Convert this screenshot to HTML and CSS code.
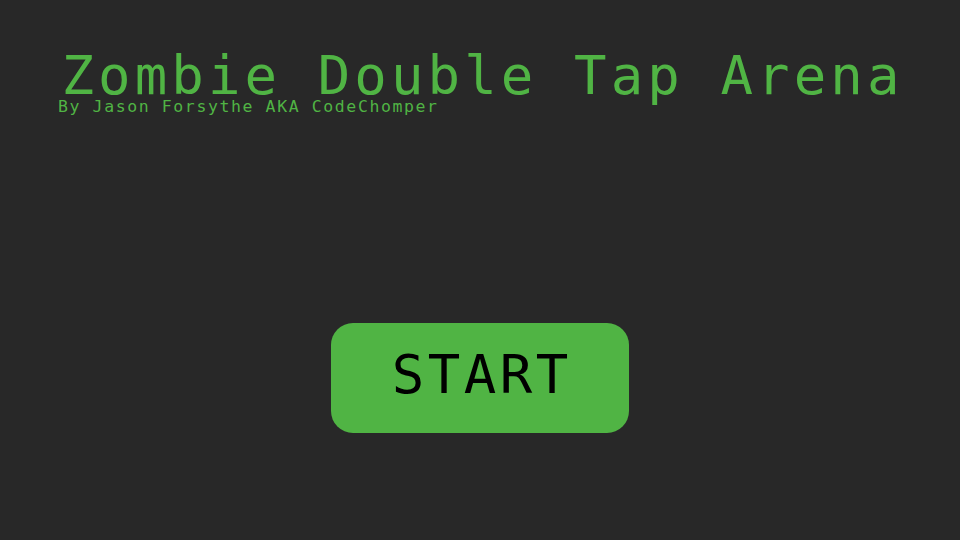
FILE: index.html
```html
<!DOCTYPE html>
<html>
<head>
<meta charset="utf-8">
<link rel="stylesheet" href="styles.css">
</head>
<body>
<main class="screen">
  <header class="header">
    <h1 class="title">Zombie Double Tap Arena</h1>
    <p class="byline">By Jason Forsythe AKA CodeChomper</p>
  </header>
  <button class="start">START</button>
</main>
</body>
</html>
```
FILE: styles.css
```css
html, body {
  margin: 0;
  padding: 0;
  background: #282828;
}
.screen {
  width: 960px;
  height: 540px;
  display: flex;
  flex-direction: column;
  align-items: center;
  font-family: "DejaVu Sans Mono", "Liberation Mono", monospace;
  box-sizing: border-box;
  padding-top: 53px;
}
.header {
  align-self: stretch;
  display: flex;
  flex-direction: column;
}
.title {
  margin: 0;
  font-weight: normal;
  font-size: 54px;
  line-height: 46px;
  letter-spacing: 4.1px;
  color: #50b444;
  text-align: center;
  padding-left: 5px;
}
.byline {
  margin: 0 0 0 58px;
  font-size: 16.5px;
  line-height: 16.5px;
  letter-spacing: 1.6px;
  color: #50b444;
}
.start {
  margin-top: 207px;
  width: 298px;
  height: 110px;
  border: none;
  border-radius: 22px;
  background: #50b444;
  color: #000;
  font-family: "DejaVu Sans Mono", "Liberation Mono", monospace;
  font-size: 54px;
  line-height: 54px;
  letter-spacing: 3.5px;
  padding: 0 0 6px 3.5px;
  display: flex;
  align-items: center;
  justify-content: center;
}
```
